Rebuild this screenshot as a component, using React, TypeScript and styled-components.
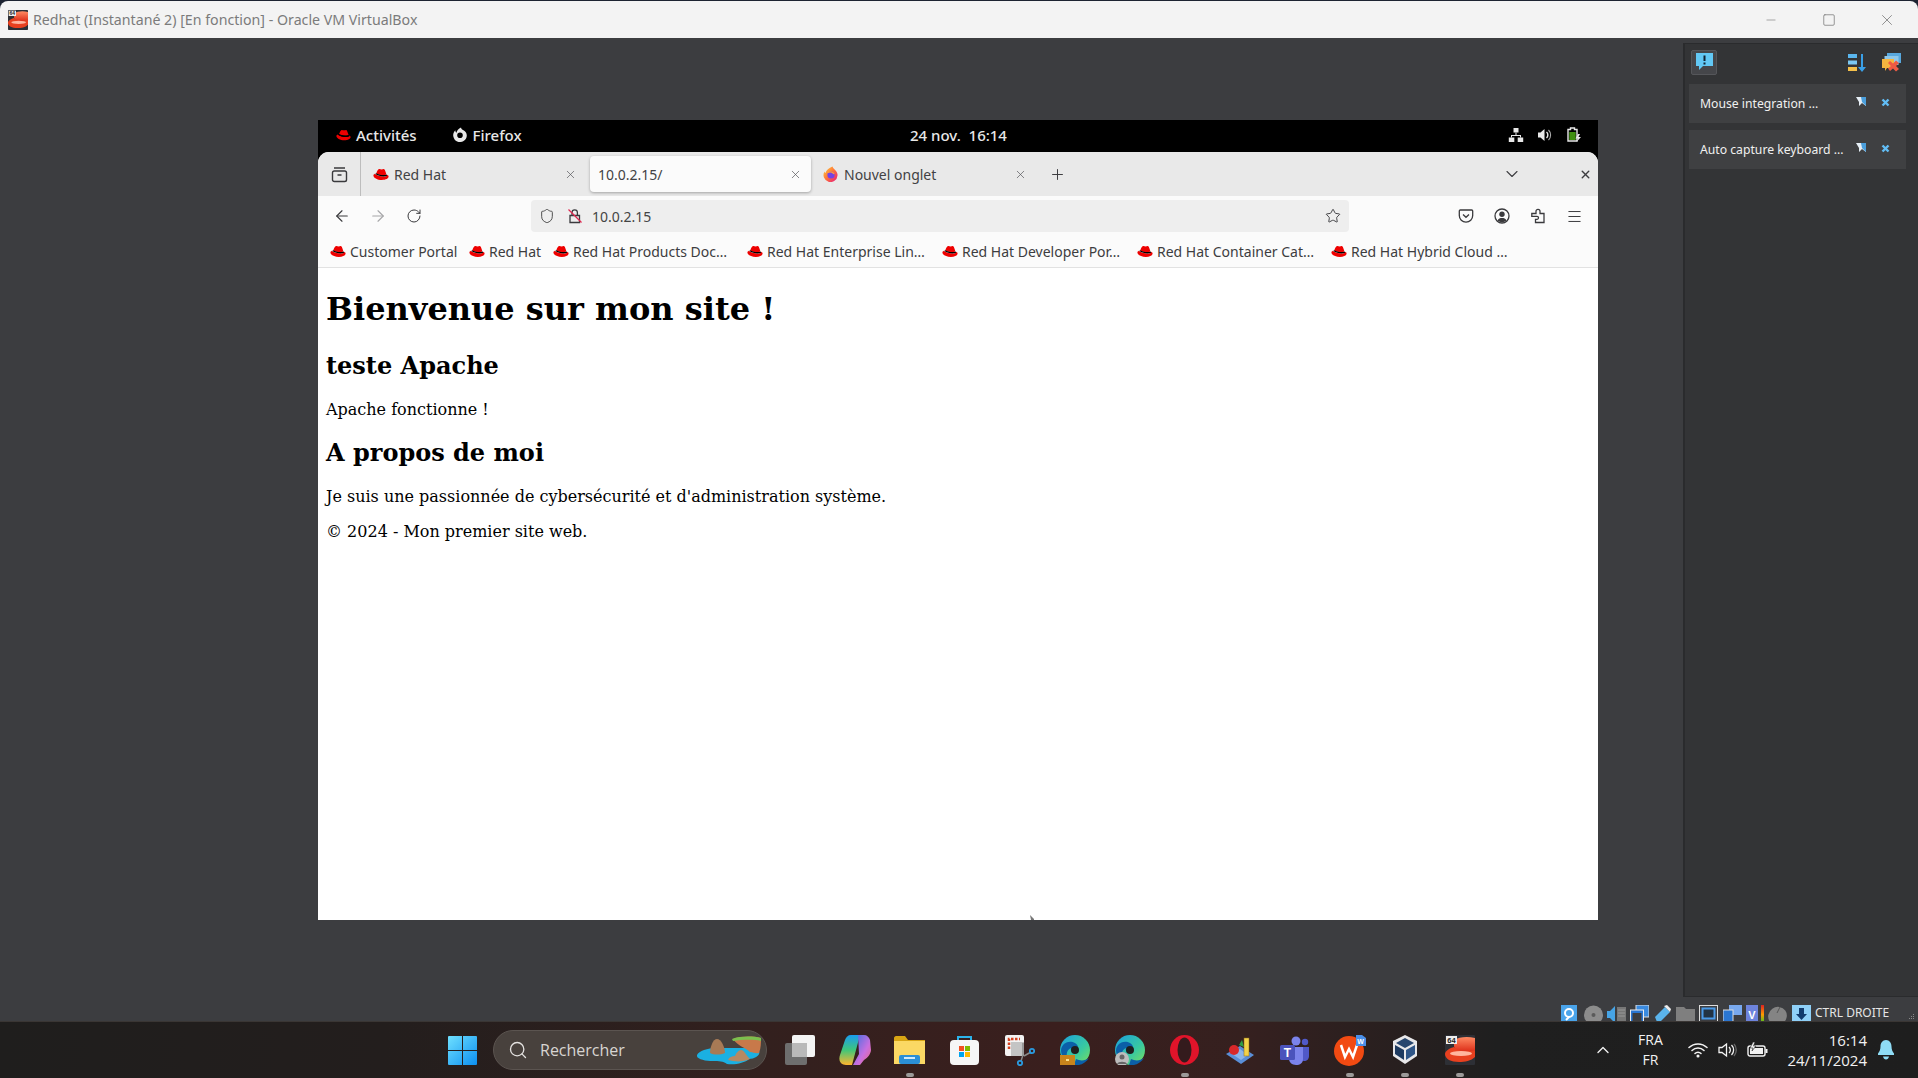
import React from "react";
import styled, { createGlobalStyle } from "styled-components";
import { ArrowLeft, ArrowRight, RotateCw, Shield, Star, X, Plus, ChevronDown, Menu, Search, ChevronUp, Minus, Square } from "lucide-react";

const Global = createGlobalStyle`
  html, body { margin: 0; padding: 0; background: #1d2331; }
  body { width: 1918px; height: 1078px; overflow: hidden; }
  * { box-sizing: border-box; }
`;

const Desktop = styled.div`
  width: 1918px; height: 1078px; display: flex; flex-direction: column;
  background: #1d2331; padding-top: 1px; overflow: hidden;
`;
const TitleBar = styled.header`
  height: 37px; flex: none; display: flex; align-items: center; background: #f3f3f3;
  border-radius: 8px 8px 0 0; padding-left: 8px;
`;
const TitleText = styled.span`
  margin-left: 5px; font: 400 14.2px "Noto Sans", sans-serif; color: #7b7b7b; white-space: nowrap; flex: 1;
`;
const WinButton = styled.span`
  width: 58px; height: 37px; display: flex; align-items: center; justify-content: center; color: #707070;
`;
const WinControls = styled.div`display: flex; padding-right: 2px;`;
const Host = styled.main`
  flex: 1; min-height: 0; display: flex; flex-direction: column; background: #3c3d40;
`;
const Workspace = styled.div`height: 959px; flex: none; display: flex;`;
const VmArea = styled.div`flex: 1; padding: 82px 0 0 318px;`;
const VmScreen = styled.div`
  width: 1280px; height: 800px; display: flex; flex-direction: column; background: #000;
`;
const GnomeBar = styled.div`
  height: 32px; flex: none; position: relative; display: flex; align-items: center; padding: 0 0 2px 18px;
  color: #e8e8e8; font: 500 15px "Noto Sans", sans-serif;
`;
const GnomeItem = styled.span<{ $ml?: number }>`
  display: flex; align-items: center; gap: 5px; margin-left: ${p => p.$ml ?? 0}px; white-space: nowrap;
`;
const GnomeClock = styled.span`
  position: absolute; left: 0; right: 0; text-align: center; pointer-events: none; padding-left: 1px;
`;
const GnomeTray = styled.span`
  margin-left: auto; display: flex; align-items: center; gap: 13px; padding-right: 16px;
`;
const Browser = styled.div`
  flex: 1; min-height: 0; display: flex; flex-direction: column; background: #fff;
  border-radius: 11px 11px 0 0; overflow: hidden; font: 400 14px "Noto Sans", sans-serif; color: #3d3d3f;
`;
const TabStrip = styled.div`height: 44px; flex: none; display: flex; align-items: center; background: #e9e9e9; padding-right: 1px;`;
const ViewButton = styled.div`
  width: 43px; height: 44px; display: flex; align-items: center; justify-content: center; border-right: 1px solid #bdbdbd;
`;
const Tab = styled.div<{ $active?: boolean }>`
  width: 221px; height: 36px; margin-left: 4px; padding: 0 8px; display: flex; align-items: center; gap: 5px;
  border-radius: 4px; white-space: nowrap; color: #424244;
  background: ${p => (p.$active ? "#fbfbfb" : "transparent")};
  box-shadow: ${p => (p.$active ? "0 1px 3px rgba(0,0,0,.3)" : "none")};
`;
const TabLabel = styled.span`flex: 1;`;
const TabClose = styled.span`width: 16px; display: flex; justify-content: center; color: #55555a;`;
const StripButton = styled.span<{ $ml?: string; $w?: number }>`
  width: ${p => p.$w ?? 24}px; display: flex; justify-content: center; margin-left: ${p => p.$ml ?? "0"}; color: #3d3d40;
`;
const NavRow = styled.div`height: 40px; flex: none; display: flex; align-items: center; background: #fbfbfb; padding-left: 6px;`;
const NavButton = styled.span<{ $muted?: boolean }>`
  width: 36px; height: 32px; display: flex; align-items: center; justify-content: center;
  color: ${p => (p.$muted ? "#a6a6a8" : "#3a3a3d")};
`;
const UrlBar = styled.div`
  width: 818px; height: 32px; margin: 0 99px; display: flex; align-items: center; background: #eeeeee;
  border-radius: 4px; padding-left: 8px; color: #444;
`;
const UrlText = styled.span`flex: 1; margin-left: 9px;`;
const UrlStar = styled.span`width: 16px; margin-right: 8px; display: flex; justify-content: center; color: #3a3a3d;`;
const Bookmarks = styled.div`
  height: 32px; flex: none; display: flex; align-items: center; background: #fbfbfb;
  border-bottom: 1px solid #e2e2e2; padding: 0 0 1px 12px;
`;
const Bookmark = styled.span<{ $w: number }>`
  width: ${p => p.$w}px; flex: none; display: flex; align-items: center; gap: 4px; white-space: nowrap;
`;
const Page = styled.article`
  flex: 1; min-height: 0; position: relative; background: #fff; padding: 1px 8px 0; overflow: hidden;
  color: #000; font: 400 16px "DejaVu Serif", serif;
`;
const H1 = styled.h1`font: 700 32px/38px "DejaVu Serif", serif; margin: 21.44px 0 23.4px;`;
const H2 = styled.h2`font: 700 24px/28px "DejaVu Serif", serif; margin: 19.92px 0;`;
const P = styled.p`font: 400 16px/19px "DejaVu Serif", serif; margin: 16px 0;`;
const CursorTip = styled.svg`position: absolute; left: 712px; bottom: 0;`;

const Panel = styled.aside`
  width: 235px; flex: none; margin-top: 5px; background: #333436; border-left: 2px solid #2a2b2d; border-top: 1px solid #2a2b2d;
  border-bottom: 1px solid #2a2b2d; padding: 5px 12px 0 4px; display: flex; flex-direction: column; gap: 7px;
`;
const PanelBar = styled.div`height: 26px; display: flex; align-items: center; padding: 0 4px 0 2px; margin-bottom: 2px; gap: 15px;`;
const PanelToggle = styled.span`
  width: 26px; height: 25px; display: flex; align-items: center; justify-content: center; background: #45464a;
  border: 1px solid #55565a; border-radius: 2px; margin-right: auto;
`;
const Notice = styled.div`
  height: 39px; display: flex; align-items: center; background: #3f4042; padding: 0 16px 0 11px;
  color: #f0f0f0; font: 400 12.2px "Noto Sans", sans-serif; white-space: nowrap;
`;
const NoticeText = styled.span`flex: 1;`;
const NoticeIcons = styled.span`display: flex; gap: 15px; align-items: center; margin-top: -3px;`;

const StatusBar = styled.div`
  flex: 1; min-height: 0; overflow: hidden; display: flex; padding: 8px 0 0 1561px; position: relative;
`;
const StatusSlot = styled.span<{ $w: number }>`width: ${p => p.$w}px; flex: none; display: block;`;
const StatusText = styled.span`color: #e6e6e6; font: 400 12px/15px "Noto Sans", sans-serif; white-space: nowrap;`;
const Grip = styled.svg`position: absolute; right: 3px; bottom: 1px;`;

const Taskbar = styled.footer`
  height: 57px; flex: none; display: flex; align-items: center; padding-left: 448px;
  background: linear-gradient(90deg,#1f1e1d 0%,#231e1d 20%,#33201e 40%,#3a1f1e 55%,#35201f 65%,#1f1f1f 78%,#1e1e1e 100%);
  border-top: 1px solid #3a3634;
`;
const Pill = styled.div`
  width: 274px; height: 40px; margin-left: 16px; border-radius: 20px; background: #48413d; border: 1px solid #5b5450;
  display: flex; align-items: center; padding-left: 14px; color: #d8d5d2; font: 400 16px "Open Sans", sans-serif; position: relative;
`;
const PillText = styled.span`margin-left: 12px; flex: 1;`;
const Apps = styled.div`display: flex; margin-left: 5px;`;
const AppSlot = styled.span<{ $running?: boolean }>`
  width: 55px; height: 57px; display: flex; align-items: center; justify-content: center; position: relative;
  &::after {
    content: ""; display: ${p => (p.$running ? "block" : "none")}; position: absolute; left: 24px; bottom: 2px;
    width: 8px; height: 4px; border-radius: 2px; background: #9c9a99;
  }
`;
const Tray = styled.div`
  margin-left: auto; display: flex; align-items: center; color: #f2f2f2; font: 400 14px/20px "Open Sans", sans-serif; padding-right: 24px;
`;
const TrayItem = styled.span<{ $ml: number }>`display: flex; align-items: center; margin-left: ${p => p.$ml}px;`;
const Lang = styled.span`width: 40px; margin-left: 17px; text-align: center; display: block;`;
const Clock = styled.span`margin-left: 19px; text-align: right; display: block; white-space: nowrap; font-size: 15px;`;

const Hat = ({ s = 16 }: { s?: number }) => (
  <svg width={s} height={s * 0.8} viewBox="0 0 20 16" style={{ flex: "none" }}>
    <path d="M7 1.500c1.200-.8 2.500.3 3.700.3 1.500 0 2.500-.8 3.400-.2 1 .7 1.700 4 2.700 6.400-3.500 1.500-9 .8-12.800-1.200C4.800 5 5.600 2.400 7 1.500z" fill="#e00" />
    <path d="M3 7.200C1.500 7.600.5 8.200.5 9.300c0 2.800 5 5.700 10.500 5.700 5 0 8.500-2 8.500-4.300 0-.9-.6-1.600-1.600-2.200 0 .8-.3 1.200-1 1.500-4 1.500-10 .6-14.900-2.800z" fill="#e00" />
    <path d="M4 6.600c3.800 2.200 9.500 3 13 1.400l.8 1.800c-4 1.600-10.500.8-15-2.200z" fill="#000" />
  </svg>
);
const GnomeFox = () => (
  <svg width="16" height="16" viewBox="0 0 16 16">
    <path fillRule="evenodd" d="M9 .5c.2 1.200.8 1.800 2 2.500 2.400 1.400 3.800 3 3.800 5.500A6.800 6.800 0 1 1 3.400 3.300C3.300 4.500 3.700 5.300 4.500 5.800 4.800 3.600 6.500 1.600 9 .5zM8 5.500a2.800 2.800 0 1 0 0 5.600 2.800 2.800 0 0 0 0-5.600z" fill="#e8e8e8" />
  </svg>
);
const FoxFav = () => (
  <svg width="16" height="16" viewBox="0 0 16 16" style={{ flex: "none" }}>
    <defs><linearGradient id="fx" x1="0" y1="0" x2="1" y2="1"><stop offset="0" stopColor="#ffd53c" /><stop offset=".5" stopColor="#ff7139" /><stop offset="1" stopColor="#e31587" /></linearGradient></defs>
    <path d="M9.500.5c.5 2 2 2.500 3.500 4.500 1.200 1.600 1.700 3 1.500 4.500A7 7 0 1 1 1.500 5.500c.2.800.5 1.200 1 1.500C3 4 6 2 9.500.5z" fill="url(#fx)" />
    <circle cx="8" cy="9" r="3.600" fill="#7542e5" />
    <path d="M4.500 6.500C7 5.500 10 6 11 8" stroke="#ff9a3c" strokeWidth="1.500" fill="none" />
  </svg>
);
const ViewIcon = () => (
  <svg width="17" height="17" viewBox="0 0 17 17" fill="none" stroke="#3a3a3d" strokeWidth="1.400">
    <rect x="1.500" y="5" width="14" height="10.500" rx="1.800" /><path d="M3 2h11M6.500 9h4" />
  </svg>
);
const NoLock = () => (
  <svg width="16" height="16" viewBox="0 0 16 16" fill="none" style={{ marginLeft: 12 }}>
    <path d="M3 7.500h9.500V14.500H3zM5 7.500V4.500a2.700 2.700 0 0 1 5.400 0v3" stroke="#3a3a3d" strokeWidth="1.300" />
    <path d="M1.500 1.500l13 13" stroke="#e22850" strokeWidth="1.300" />
  </svg>
);
const Pocket = () => (
  <svg width="16" height="16" viewBox="0 0 16 16" fill="none" stroke="#3a3a3d" strokeWidth="1.300">
    <path d="M2.300 2h11.400c.6 0 1 .4 1 1v4.500a6.700 6.700 0 0 1-13.400 0V3c0-.6.400-1 1-1z" /><path d="M5 6.500l3 2.800 3-2.800" />
  </svg>
);
const Account = () => (
  <svg width="16" height="16" viewBox="0 0 16 16" fill="none">
    <circle cx="8" cy="8" r="7" stroke="#3a3a3d" strokeWidth="1.300" /><circle cx="8" cy="6.300" r="2.700" fill="#3a3a3d" />
    <path d="M3.500 12.500c1-2 2.500-2.500 4.500-2.500s3.500.5 4.500 2.500c-1.200 1.100-2.700 1.700-4.500 1.700s-3.300-.6-4.500-1.700z" fill="#3a3a3d" />
  </svg>
);
const PuzzleIcon = () => (
  <svg width="16" height="16" viewBox="0 0 16 16" fill="none" stroke="#3a3a3d" strokeWidth="1.300">
    <path d="M14 5.500v9H5.500v-3.200H7a1.500 1.500 0 0 0 0-3H1.800V5.500H6V3.300a2 2 0 0 1 4 0v2.200z" />
  </svg>
);
const NetTree = () => (
  <svg width="16" height="16" viewBox="0 0 16 16" fill="#e8e8e8">
    <rect x="5.500" y="1" width="5" height="4.500" /><rect x=".8" y="10.500" width="5.500" height="4.500" /><rect x="9.700" y="10.500" width="5.500" height="4.500" />
    <path d="M7.500 5.500h1V8h4.500v2.500h-1V9H4v1.500H3V8h4.500z" />
  </svg>
);
const GnomeVol = () => (
  <svg width="16" height="16" viewBox="0 0 16 16" fill="none">
    <path d="M1 5.500h2.500L7.500 2v12l-4-3.500H1z" fill="#e8e8e8" />
    <path d="M9.500 5a4 4 0 0 1 0 6" stroke="#e8e8e8" strokeWidth="1.400" /><path d="M11.500 3a7 7 0 0 1 0 10" stroke="#aaa" strokeWidth="1.100" />
  </svg>
);
const GnomeBatt = () => (
  <svg width="16" height="16" viewBox="0 0 16 16" fill="none">
    <path d="M4.500 1h4v1.500H11v11.500H2V2.500h2.500z" stroke="#e8e8e8" strokeWidth="1.400" fill="#000" />
    <rect x="3.300" y="5" width="6.400" height="8" fill="#3f8f10" />
    <path d="M12 7l-2.500 4.500H12L10.500 15l4.500-5h-2.500L14 7z" fill="#e8e8e8" />
  </svg>
);
const ToastIcon = () => (
  <svg width="19" height="20" viewBox="0 0 19 20">
    <path d="M1 1h17v13H8l-4 4v-4H1z" fill="#62c8f5" /><rect x="8.500" y="3.500" width="2" height="5.500" fill="#123" /><rect x="8.500" y="10.500" width="2" height="2" fill="#123" />
  </svg>
);
const SortIcon = () => (
  <svg width="19" height="19" viewBox="0 0 19 19">
    <rect x="0" y="1" width="9" height="4" fill="#5ab6ee" /><rect x="0" y="7.500" width="9" height="4" fill="#7cc8f2" /><rect x="0" y="14" width="9" height="4" fill="#f5c04a" />
    <path d="M13 1h2v13h3l-4 5-4-5h3z" fill="#3aa0e8" />
  </svg>
);
const ClearAll = () => (
  <svg width="20" height="20" viewBox="0 0 20 20">
    <rect x="5" y="1" width="14" height="10" fill="#58a8de" /><rect x="2.500" y="4" width="14" height="9" fill="#8fc8ea" />
    <path d="M0 7h12v9H5l-2 3v-3H0z" fill="#f5b53f" />
    <path d="M8 9l3 2.500L14 8.500l3 2.500-3 3 3 3-3 2.500-3-3-3 2.500-2-2.500 3-2.500-3-3z" fill="#ee5a44" />
  </svg>
);
const Pin = () => (
  <svg width="10" height="10" viewBox="0 0 10 10"><path d="M0 0h10v9L6 6 3 9V5z" fill="#e6eef5" /><path d="M5 0h5v9L6 5z" fill="#4b9fdc" /></svg>
);
const Dismiss = () => (
  <svg width="9" height="9" viewBox="0 0 9 9"><path d="M1.500 1.500l6 6M7.500 1.500l-6 6" stroke="#62bdf5" strokeWidth="2.400" /></svg>
);

const Bx = ({ children, w = 19 }: { children: React.ReactNode; w?: number }) => (
  <svg width={w} height="19" viewBox={`0 0 ${w} 19`}>{children}</svg>
);
const sIcons: [number, React.ReactNode][] = [
  [23, <Bx w={16}><rect width="16" height="19" fill="#4aa4ea" /><circle cx="8" cy="8" r="4" stroke="#fff" strokeWidth="2" fill="none" /><path d="M8 12l-3 3" stroke="#fff" strokeWidth="2" /></Bx>],
  [23, <Bx><circle cx="9.500" cy="10" r="9.500" fill="#8c8c8c" /><circle cx="9.500" cy="10" r="2" fill="#5a5a5a" /></Bx>],
  [23, <Bx><path d="M0 6h3l5-5v17l-5-5H0z" fill="#46a4e6" /><rect x="10" y="2" width="9" height="15" fill="#777" /><path d="M11 5h7M11 8h7M11 11h7" stroke="#999" /></Bx>],
  [24, <Bx><rect x="6" y="0" width="13" height="12" fill="#3a8be0" stroke="#ddd" /><rect x="0.500" y="5" width="13" height="13" fill="#2a76d2" stroke="#eee" /><rect x="2.500" y="8" width="9" height="8" fill="#3c3d40" /></Bx>],
  [22, <Bx w={17}><path d="M1 12L11 2l5 5-10 10H3z" fill="#5ab4ec" /><path d="M10 1l3-1 4 4-1 3z" fill="#eee" /></Bx>],
  [23, <Bx><path d="M0 2h8l2 2h9v15H0z" fill="#7f7f7f" /></Bx>],
  [24, <Bx><rect x="0.500" y="0.500" width="18" height="18" fill="#3c3d40" stroke="#ddd" /><rect x="3.500" y="3.500" width="12" height="10" fill="#234" stroke="#4a9ae8" strokeWidth="2" /></Bx>],
  [23, <Bx><rect x="6" y="0" width="13" height="10" fill="#79a9ee" /><rect x="0" y="5" width="10" height="12" fill="#2a76d2" stroke="#ddd" /></Bx>],
  [15, <Bx w={12}><rect x="0" y="0" width="12" height="19" fill="#6d83dc" /><text x="6" y="14" fontSize="11" fontWeight="700" textAnchor="middle" fill="#fff" fontFamily="Liberation Sans">V</text></Bx>],
  [7, <Bx w={3}><defs><linearGradient id="lv" x1="0" y1="0" x2="0" y2="1"><stop offset="0" stopColor="#d22" /><stop offset=".5" stopColor="#f90" /><stop offset="1" stopColor="#2c2" /></linearGradient></defs><rect width="3" height="19" fill="url(#lv)" /></Bx>],
  [24, <Bx><ellipse cx="9.500" cy="11" rx="9.500" ry="9" fill="#848484" transform="rotate(-35 9.500 11)" /><path d="M12 2l-3 6" stroke="#555" /></Bx>],
  [23, <Bx><rect width="19" height="19" fill="#8fd0f8" /><path d="M7 3h5v6h3l-5.500 6L4 9h3z" fill="#123b6e" /></Bx>],
];

const RedhatApp = ({ s }: { s: number }) => (
  <svg width={s} height={s} viewBox="0 0 30 30" style={{ flex: "none" }}>
    <defs><linearGradient id="rh" x1="0" y1="0" x2="0" y2="1"><stop offset="0" stopColor="#ff8a62" /><stop offset="1" stopColor="#d8220f" /></linearGradient></defs>
    <rect width="30" height="30" rx="1" fill="#2d2f35" />
    <path d="M9 5c5-3 13-4 21-2v12c-2 3-8 4-12 3-5-1-9-4-9-7z" fill="url(#rh)" />
    <path d="M0 19c0-3 5-6 9-7 3 4 12 6 21 3v7c-4 4-10 5-16 5-8 0-14-3-14-8z" fill="#e8401f" />
    <ellipse cx="16" cy="18.500" rx="11" ry="2.500" fill="#ffb59e" />
    <rect x="1" y="1" width="11" height="8" fill="#eee" />
    <text x="6.500" y="7.500" fontSize="7.500" fontWeight="700" textAnchor="middle" fontFamily="Liberation Sans" fill="#222">64</text>
  </svg>
);
const Windows = () => (
  <svg width="29" height="29" viewBox="0 0 29 29" style={{ flex: "none" }}>
    <defs><linearGradient id="wn" x1="0" y1="0" x2="1" y2="1"><stop offset="0" stopColor="#6fe0ff" /><stop offset="1" stopColor="#0c8ff0" /></linearGradient></defs>
    <path d="M1 0h13v14H0V1a1 1 0 0 1 1-1zM15 0h13a1 1 0 0 1 1 1v13H15zM0 15h14v14H1a1 1 0 0 1-1-1zM15 15h14v13a1 1 0 0 1-1 1H15z" fill="url(#wn)" />
  </svg>
);
const Island = () => (
  <svg width="66" height="32" viewBox="0 0 66 32" style={{ marginRight: 3, flex: "none" }}>
    <path d="M0 21c2-4 10-7 20-7h24c8 0 16 0 18 3 2 4-4 8-10 8-4 4-14 6-22 5-4-3-8-3-14-3-8 0-17-2-16-6z" fill="#1ab0e2" />
    <path d="M13 19c0-6 3-14 7-14 4 0 8 8 8 14-5 2-11 2-15 0z" fill="#a87a55" />
    <path d="M36 5c8-3 20-3 28-1 0 5 0 10-2 15-3 1-6-1-9-1-4-4-12-6-17-13z" fill="#c8794a" />
    <path d="M35 5c8-3 20-3 29-1l0 3c-9-2-19-1-28 0z" fill="#7bbf4e" />
    <path d="M31 26c1-3 4-4 7-4 1-3 4-6 6-6 3 0 5 5 9 9-6 3-15 3-22 1z" fill="#b58963" />
  </svg>
);
const TaskView = () => (
  <svg width="30" height="30" viewBox="0 0 30 30"><rect x="7" y="0" width="23" height="22" rx="2" fill="#f4f4f4" /><rect x="0" y="8" width="22" height="22" rx="2" fill="#6e6e6e" /><rect x="7" y="8" width="15" height="14" fill="#b9b9b9" /></svg>
);
const Copilot = () => (
  <svg width="32" height="30" viewBox="0 0 32 30">
    <defs><linearGradient id="c1" x1="0" y1="1" x2="0" y2="0"><stop offset="0" stopColor="#ffb52e" /><stop offset=".5" stopColor="#3fc67a" /><stop offset="1" stopColor="#1a9cf0" /></linearGradient><linearGradient id="c2" x1="0" y1="0" x2="1" y2="1"><stop offset="0" stopColor="#3a6fe0" /><stop offset=".6" stopColor="#c86fe0" /><stop offset="1" stopColor="#f06a80" /></linearGradient></defs>
    <path d="M12 0h9l-8 30H7c-5 0-8-4-6-10L6 5c1-3 3-5 6-5z" fill="url(#c1)" />
    <path d="M19 0h6c3 0 5 2 6 5l1 10c0 3-3 8-7 10l-4 5h-7l6-11z" fill="url(#c2)" />
  </svg>
);
const Folder = () => (
  <svg width="31" height="28" viewBox="0 0 31 28"><path d="M0 2c0-1 1-2 2-2h9l3 4h17v22H0z" fill="#d9a514" /><rect y="5" width="31" height="23" fill="#fbd864" /><rect x="5" y="19" width="21" height="9" rx="2" fill="#2b8fd6" /><rect x="10" y="21" width="11" height="2" fill="#cfe9fb" /></svg>
);
const Store = () => (
  <svg width="29" height="30" viewBox="0 0 29 30" fill="none">
    <path d="M8 6V2h13v4" stroke="#2cb3ea" strokeWidth="2" /><rect y="5" width="29" height="25" rx="4" fill="#f6f6f6" />
    <rect x="9" y="11" width="5" height="5" fill="#f25022" /><rect x="15" y="11" width="5" height="5" fill="#7fba00" /><rect x="9" y="17" width="5" height="5" fill="#00a4ef" /><rect x="15" y="17" width="5" height="5" fill="#ffb900" />
  </svg>
);
const Snip = () => (
  <svg width="30" height="31" viewBox="0 0 30 31" fill="none">
    <rect width="19" height="21" rx="2" fill="#f3f3f3" /><path d="M4 14V4h11" stroke="#d5401f" strokeWidth="2.500" strokeDasharray="2.500 1.500" /><rect x="6" y="7" width="13" height="14" fill="#c4c4c4" />
    <path d="M18 8v12l-2 6M19 21l7-4" stroke="#8a8a8a" strokeWidth="1.500" /><circle cx="15" cy="28" r="2.200" stroke="#2a9be0" strokeWidth="1.800" /><circle cx="27" cy="16" r="2.200" stroke="#2a9be0" strokeWidth="1.800" />
  </svg>
);
const Edge = ({ badge }: { badge: "work" | "user" }) => (
  <svg width="30" height="30" viewBox="0 0 30 30">
    <defs><linearGradient id="ed" x1="0" y1="0" x2="1" y2="1"><stop offset="0" stopColor="#1a9fe0" /><stop offset=".6" stopColor="#39c9a0" /><stop offset="1" stopColor="#7ee05a" /></linearGradient></defs>
    <circle cx="15" cy="15" r="15" fill="url(#ed)" /><path d="M1 15C2 7 10 5 15 8c4 2 4 8 1 9-4 1-6-1-5-4-5 2-6 9-1 14C5 26 1 21 1 15z" fill="#0b5fa8" />
    <circle cx="15" cy="15" r="4" fill="#1e1e1e" /><path d="M14 30c6 1 12-2 15-7-4 3-9 3-13 1z" fill="#0b5fa8" />
    {badge === "work" ? (<g><rect y="20" width="15" height="10" fill="#c8841c" /><rect x="6" y="24" width="3" height="2" fill="#fbe08a" /></g>) : (<g><circle cx="7" cy="24" r="7" fill="#bdbdbd" /><circle cx="7" cy="22" r="2.500" fill="#666" /><path d="M2 29c1-3 9-3 10 0z" fill="#666" /></g>)}
  </svg>
);
const Opera = () => (
  <svg width="29" height="30" viewBox="0 0 29 30"><ellipse cx="14.500" cy="15" rx="14.500" ry="15" fill="#e0142a" /><ellipse cx="14.500" cy="15" rx="7" ry="12.500" fill="#341b1d" /></svg>
);
const Blueprint = () => (
  <svg width="28" height="30" viewBox="0 0 28 30">
    <path d="M0 19L14 11l14 9-13 9z" fill="#5a8fd8" /><path d="M6 19l8-5 8 6-7 5z" fill="#8ab4ea" />
    <path d="M13 10l3-5 2 7z" fill="#2f9e44" /><circle cx="8" cy="15" r="5" fill="#d8282a" /><rect x="18" y="3" width="5" height="18" fill="#f2d24a" stroke="#8a6a1a" strokeWidth=".5" />
  </svg>
);
const Teams = () => (
  <svg width="30" height="29" viewBox="0 0 30 29">
    <circle cx="16" cy="5" r="4.500" fill="#7b83eb" /><circle cx="25" cy="6" r="3.200" fill="#5059c9" /><path d="M20 11h9v9c0 3-2 5-5 5-2 0-4-1-4-4z" fill="#5059c9" /><path d="M9 11h14v12c0 4-3 6-7 6-4 0-7-3-7-6z" fill="#7b83eb" />
    <rect y="9" width="15" height="15" rx="1.500" fill="#4b53bc" /><text x="7.500" y="21" textAnchor="middle" fontSize="12" fontWeight="700" fill="#fff" fontFamily="Liberation Sans">T</text>
  </svg>
);
const Wps = () => (
  <svg width="32" height="32" viewBox="0 0 32 32">
    <circle cx="15" cy="17" r="15" fill="#f24a12" /><path d="M7 11l4 12 4-8 4 8 4-12" fill="none" stroke="#fff" strokeWidth="2.500" />
    <path d="M22 1h6l4 3v8H22z" fill="#4a8fe8" /><text x="26.500" y="10" textAnchor="middle" fontSize="7" fontWeight="700" fill="#fff" fontFamily="Liberation Sans">W</text>
  </svg>
);
const VBoxApp = () => (
  <svg width="26" height="32" viewBox="0 0 26 32">
    <path d="M13 1l12 6v15l-12 8-12-8V7z" fill="#e8e8ea" /><path d="M13 4l9 5-9 5-9-5z" fill="#27466e" /><path d="M3 11l9 5v10l-9-6z" fill="#1d3a60" /><path d="M14 16l9-5v9l-9 6z" fill="#2f5688" />
  </svg>
);
const WifiIcon = () => (
  <svg width="20" height="16" viewBox="0 0 20 16" fill="none" stroke="#f2f2f2" strokeWidth="1.500" strokeLinecap="round">
    <path d="M1 5.500a13 13 0 0 1 18 0M4 8.500a8.500 8.500 0 0 1 12 0M7 11.500a4 4 0 0 1 6 0" /><circle cx="10" cy="14" r=".8" fill="#f2f2f2" />
  </svg>
);
const VolIcon = () => (
  <svg width="20" height="16" viewBox="0 0 20 16" fill="none" stroke="#f2f2f2" strokeWidth="1.300">
    <path d="M1 5.500h3L8.500 2v12L4 10.500H1z" /><path d="M11 5a4 4 0 0 1 0 6M13.500 3a7 7 0 0 1 0 10" /><path d="M16 2a9 9 0 0 1 0 12" stroke="#666" />
  </svg>
);
const BattIcon = () => (
  <svg width="21" height="16" viewBox="0 0 21 16" fill="none">
    <rect x="1" y="4" width="17" height="10" rx="2" stroke="#f2f2f2" strokeWidth="1.400" /><rect x="3" y="6" width="13" height="6" fill="#f2f2f2" /><rect x="18.500" y="7" width="2" height="4" fill="#f2f2f2" />
    <path d="M6 0L3 6h3L5 9l4-5H6.500L8 0z" fill="#f2f2f2" stroke="#1e1e1e" strokeWidth=".6" />
  </svg>
);
const BellIcon = () => (
  <svg width="16" height="20" viewBox="0 0 16 20"><path d="M8 0c3.500 0 5.500 3 5.500 6.500 0 3 1 5 2.500 7v1.500H0v-1.500c1.500-2 2.500-4 2.500-7C2.500 3 4.500 0 8 0z" fill="#8fdcf5" /><path d="M5 16.500h6c-.5 2-1.500 3-3 3s-2.500-1-3-3z" fill="#8fdcf5" /></svg>
);

const bookmarks: [string, number][] = [
  ["Customer Portal", 139], ["Red Hat", 84], ["Red Hat Products Doc…", 194],
  ["Red Hat Enterprise Lin…", 195], ["Red Hat Developer Por…", 195], ["Red Hat Container Cat…", 194], ["Red Hat Hybrid Cloud …", 190],
];

const Notif = ({ text }: { text: string }) => (
  <Notice><NoticeText>{text}</NoticeText><NoticeIcons><Pin /><Dismiss /></NoticeIcons></Notice>
);

export default function App() {
  return (
    <Desktop>
      <Global />
      <TitleBar>
        <RedhatApp s={20} />
        <TitleText>Redhat (Instantané 2) [En fonction] - Oracle VM VirtualBox</TitleText>
        <WinControls>
          <WinButton><Minus size={14} strokeWidth={1} /></WinButton>
          <WinButton><Square size={14} strokeWidth={1.2} /></WinButton>
          <WinButton><X size={18} strokeWidth={1} /></WinButton>
        </WinControls>
      </TitleBar>
      <Host>
        <Workspace>
          <VmArea>
            <VmScreen>
              <GnomeBar>
                <GnomeItem><Hat s={15} />Activités</GnomeItem>
                <GnomeItem $ml={35}><GnomeFox />Firefox</GnomeItem>
                <GnomeClock>24 nov.&nbsp; 16:14</GnomeClock>
                <GnomeTray><NetTree /><GnomeVol /><GnomeBatt /></GnomeTray>
              </GnomeBar>
              <Browser>
                <TabStrip>
                  <ViewButton><ViewIcon /></ViewButton>
                  <Tab><Hat /><TabLabel>Red Hat</TabLabel><TabClose><X size={13} strokeWidth={1.3} /></TabClose></Tab>
                  <Tab $active><TabLabel>10.0.2.15/</TabLabel><TabClose><X size={13} strokeWidth={1.3} /></TabClose></Tab>
                  <Tab><FoxFav /><TabLabel>Nouvel onglet</TabLabel><TabClose><X size={13} strokeWidth={1.3} /></TabClose></Tab>
                  <StripButton $ml="9px"><Plus size={17} strokeWidth={1.4} /></StripButton>
                  <StripButton $ml="auto"><ChevronDown size={20} strokeWidth={1.3} /></StripButton>
                  <StripButton $ml="49px" $w={24}><X size={13} strokeWidth={2.6} /></StripButton>
                </TabStrip>
                <NavRow>
                  <NavButton><ArrowLeft size={18} strokeWidth={1.5} /></NavButton>
                  <NavButton $muted><ArrowRight size={18} strokeWidth={1.5} /></NavButton>
                  <NavButton><RotateCw size={16} strokeWidth={1.5} /></NavButton>
                  <UrlBar>
                    <Shield size={16} strokeWidth={1.4} />
                    <NoLock />
                    <UrlText>10.0.2.15</UrlText>
                    <UrlStar><Star size={16} strokeWidth={1.4} /></UrlStar>
                  </UrlBar>
                  <NavButton><Pocket /></NavButton>
                  <NavButton><Account /></NavButton>
                  <NavButton><PuzzleIcon /></NavButton>
                  <NavButton><Menu size={17} strokeWidth={1.4} /></NavButton>
                </NavRow>
                <Bookmarks>
                  {bookmarks.map(([t, w]) => (
                    <Bookmark key={t} $w={w}><Hat /><span>{t}</span></Bookmark>
                  ))}
                </Bookmarks>
                <Page>
                  <H1>Bienvenue sur mon site !</H1>
                  <H2>teste Apache</H2>
                  <P>Apache fonctionne !</P>
                  <H2>A propos de moi</H2>
                  <P>Je suis une passionnée de cybersécurité et d'administration système.</P>
                  <P>© 2024 - Mon premier site web.</P>
                  <CursorTip width="4" height="5" viewBox="0 0 4 5"><path d="M0 0l4 4v1H1z" fill="#777" /></CursorTip>
                </Page>
              </Browser>
            </VmScreen>
          </VmArea>
          <Panel>
            <PanelBar>
              <PanelToggle><ToastIcon /></PanelToggle>
              <SortIcon />
              <ClearAll />
            </PanelBar>
            <Notif text="Mouse integration ..." />
            <Notif text="Auto capture keyboard ..." />
          </Panel>
        </Workspace>
        <StatusBar>
          {sIcons.map(([w, icon], i) => <StatusSlot key={i} $w={w}>{icon}</StatusSlot>)}
          <StatusText>CTRL DROITE</StatusText>
          <Grip width="7" height="7" viewBox="0 0 7 7"><path d="M5 1h1v1H5zM3 3h1v1H3zM5 3h1v1H5zM1 5h1v1H1zM3 5h1v1H3zM5 5h1v1H5z" fill="#888" /></Grip>
        </StatusBar>
      </Host>
      <Taskbar>
        <Windows />
        <Pill>
          <Search size={20} strokeWidth={1.6} color="#e4e2e0" />
          <PillText>Rechercher</PillText>
          <Island />
        </Pill>
        <Apps>
          <AppSlot><TaskView /></AppSlot>
          <AppSlot><Copilot /></AppSlot>
          <AppSlot $running><Folder /></AppSlot>
          <AppSlot><Store /></AppSlot>
          <AppSlot><Snip /></AppSlot>
          <AppSlot><Edge badge="work" /></AppSlot>
          <AppSlot><Edge badge="user" /></AppSlot>
          <AppSlot $running><Opera /></AppSlot>
          <AppSlot><Blueprint /></AppSlot>
          <AppSlot><Teams /></AppSlot>
          <AppSlot $running><Wps /></AppSlot>
          <AppSlot $running><VBoxApp /></AppSlot>
          <AppSlot $running><RedhatApp s={30} /></AppSlot>
        </Apps>
        <Tray>
          <TrayItem $ml={0}><ChevronUp size={20} strokeWidth={1.6} /></TrayItem>
          <Lang>FRA<br />FR</Lang>
          <TrayItem $ml={18}><WifiIcon /></TrayItem>
          <TrayItem $ml={10}><VolIcon /></TrayItem>
          <TrayItem $ml={9}><BattIcon /></TrayItem>
          <Clock>16:14<br />24/11/2024</Clock>
          <TrayItem $ml={11}><BellIcon /></TrayItem>
        </Tray>
      </Taskbar>
    </Desktop>
  );
}
